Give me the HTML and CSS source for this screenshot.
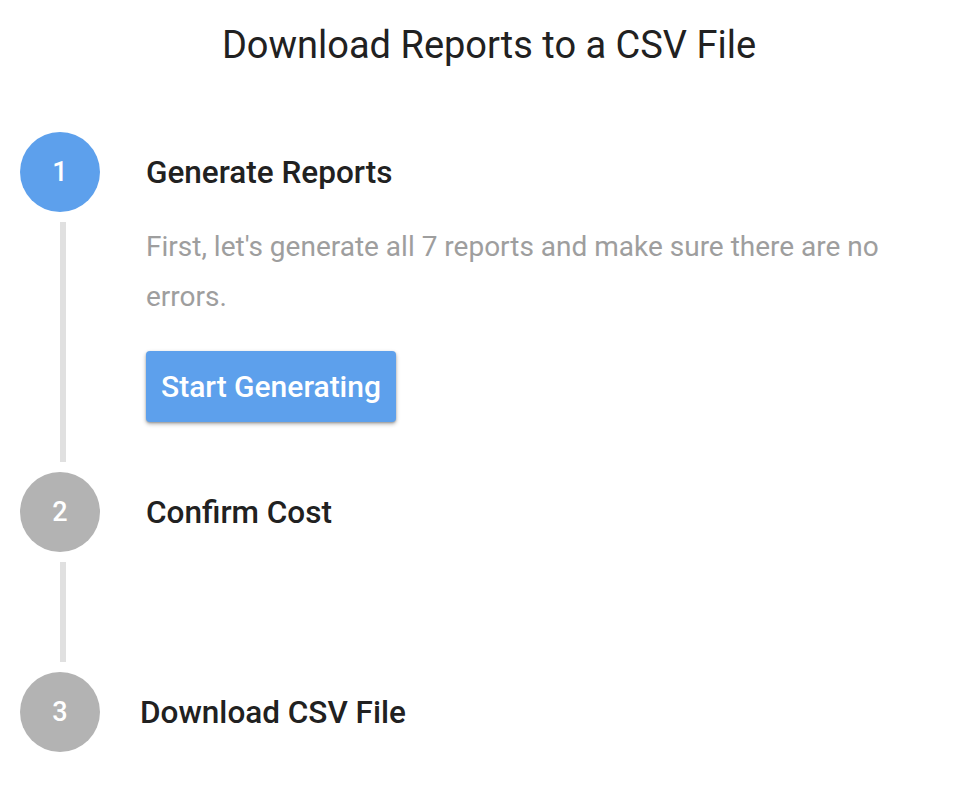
FILE: index.html
```html
<!DOCTYPE html>
<html lang="en">
<head>
<meta charset="utf-8">
<title>Download Reports to a CSV File</title>
<link rel="stylesheet" href="styles.css">
</head>
<body>
<main class="page">
  <h1 class="title">Download Reports to a CSV File</h1>
  <ol class="stepper">
    <li class="step">
      <div class="step-head">
        <span class="step-icon step-icon--active">1</span>
        <span class="step-label">Generate Reports</span>
      </div>
      <div class="step-content">
        <p class="step-text">First, let's generate all 7 reports and make sure there are no errors.</p>
        <button class="btn" type="button">Start Generating</button>
      </div>
    </li>
    <li class="step">
      <div class="step-head">
        <span class="step-icon">2</span>
        <span class="step-label">Confirm Cost</span>
      </div>
      <div class="step-content step-content--empty"></div>
    </li>
    <li class="step">
      <div class="step-head">
        <span class="step-icon">3</span>
        <span class="step-label step-label--last">Download CSV File</span>
      </div>
    </li>
  </ol>
</main>
</body>
</html>
```
FILE: styles.css
```css
html, body {
  margin: 0;
  padding: 0;
  background: #ffffff;
}

body {
  font-family: Roboto, "Noto Sans", "Liberation Sans", sans-serif;
  color: #212121;
}

.page {
  padding: 23px 0 0 20px;
}

.title {
  margin: 0;
  padding-left: 4px;
  text-align: center;
  font-size: 38px;
  line-height: 44px;
  font-weight: 400;
  color: #212121;
}

.stepper {
  list-style: none;
  margin: 65px 0 0 0;
  padding: 0;
}

.step-head {
  display: flex;
  align-items: center;
  height: 80px;
}

.step-icon {
  flex: 0 0 auto;
  width: 80px;
  height: 80px;
  border-radius: 50%;
  background: #b3b3b3;
  color: #ffffff;
  display: flex;
  align-items: center;
  justify-content: center;
  font-size: 27px;
  font-weight: 500;
}

.step-icon--active {
  background: #5da0ec;
}

.step-label {
  margin-left: 46px;
  font-size: 31.5px;
  font-weight: 500;
  color: #212121;
}

.step-label--last {
  margin-left: 40px;
}

.step-content {
  margin: 10px 0 10px 40px;
  border-left: 6px solid #e0e0e0;
  padding: 0 0 40px 80px;
}

.step-content--empty {
  height: 100px;
  padding-bottom: 0;
  box-sizing: border-box;
}

.step-text {
  margin: 0;
  max-width: 770px;
  font-size: 28px;
  line-height: 50px;
  color: #9e9e9e;
}

.btn {
  margin-top: 29px;
  height: 71px;
  padding: 0 15px;
  border: none;
  border-radius: 4px;
  background: #5da0ec;
  color: #ffffff;
  font-family: inherit;
  font-size: 30px;
  font-weight: 500;
  box-shadow: 0 2px 4px rgba(0, 0, 0, 0.3), 0 1px 2px rgba(0, 0, 0, 0.2);
  cursor: pointer;
}
```
